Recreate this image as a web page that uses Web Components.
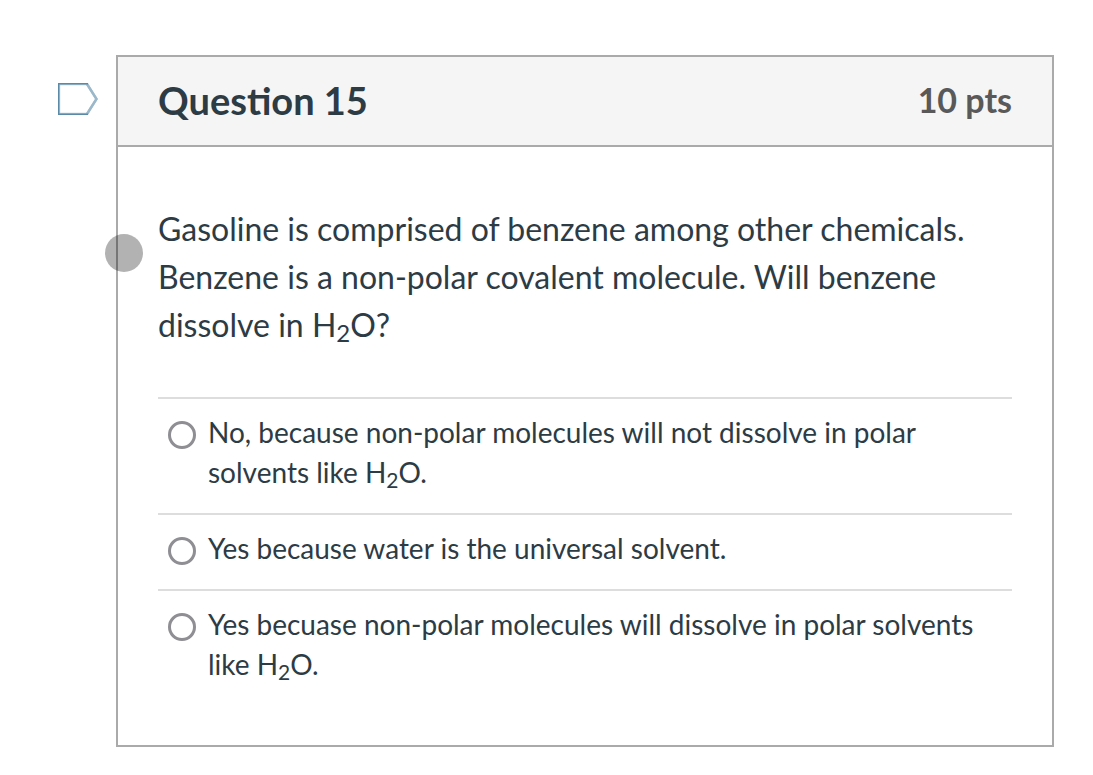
<!DOCTYPE html>
<html lang="en">
<head>
<meta charset="utf-8">
<meta name="viewport" content="width=device-width, initial-scale=1">
<title>Question 15</title>
<style>
  body { margin: 0; background: #fff; color: #2d3b45; font-family: Lato, "Liberation Sans", sans-serif; }
  sub { font-size: 75%; line-height: 0; vertical-align: -5px; }
</style>
</head>
<body>
<quiz-question>
  <flag-button slot="flag"></flag-button>
  <span slot="title">Question 15</span>
  <span slot="points">10 pts</span>
  <span slot="text">Gasoline is comprised of benzene among other chemicals. Benzene is a non-polar covalent molecule. Will benzene dissolve in H<sub>2</sub>O?</span>
  <answer-group>
    <answer-option value="a">No, because non-polar molecules will not dissolve in polar solvents like H<sub>2</sub>O.</answer-option>
    <answer-option value="b">Yes because water is the universal solvent.</answer-option>
    <answer-option value="c">Yes becuase non-polar molecules will dissolve in polar solvents like H<sub>2</sub>O.</answer-option>
  </answer-group>
</quiz-question>

<template id="quiz-question">
  <style>
    :host { display: grid; grid-template-columns: 58px minmax(0, 1fr); padding: 55px 39px 28px 58px; }
    .flag { padding-top: 28px; }
    .card { position: relative; border: 2px solid #aaa; background: #fff; }
    header { display: flex; align-items: center; justify-content: space-between; padding: 19px 40px 21px; background: #f5f5f5; border-bottom: 2px solid #aaa; }
    h2 { margin: 0; font-size: 38px; line-height: 48px; font-weight: 700; }
    .points { font-size: 34px; line-height: 48px; font-weight: 700; color: #595959; }
    .body { padding: 58px 40px 40px; }
    p { margin: 0 0 48px; font-size: 32px; line-height: 48px; }
    .touch { position: absolute; left: -13px; top: 177px; width: 38px; height: 38px; border-radius: 50%; background: rgba(0, 0, 0, .3); pointer-events: none; }
  </style>
  <div class="flag"><slot name="flag"></slot></div>
  <section class="card">
    <header>
      <h2><slot name="title"></slot></h2>
      <div class="points"><slot name="points"></slot></div>
    </header>
    <div class="body">
      <p><slot name="text"></slot></p>
      <slot></slot>
    </div>
    <div class="touch"></div>
  </section>
</template>

<template id="flag-button">
  <style>
    :host { display: block; }
    button { display: block; padding: 0; border: 0; background: none; cursor: pointer; }
    svg { display: block; }
  </style>
  <button type="button" aria-label="Flag question" aria-pressed="false">
    <svg width="40" height="32" viewBox="0 0 40 32" fill="none">
      <path d="M1 1H29L38.500 16L29 31H1Z" stroke="#b5cbd9" stroke-width="2.400"/>
      <path d="M29 1L38.500 16L29 31" stroke="#9bb8cb" stroke-width="2.400"/>
      <path d="M30 .7H.7V31.300H30" stroke="#5a8aa8" stroke-width="1.400"/>
    </svg>
  </button>
</template>

<template id="answer-group">
  <style>
    :host { display: block; }
  </style>
  <slot></slot>
</template>

<template id="answer-option">
  <style>
    :host { display: block; border-top: 2px solid #ddd; padding: 13px 10px 21px; }
    label { display: grid; grid-template-columns: 28px minmax(0, 1fr); column-gap: 12px; font-size: 28px; line-height: 40px; cursor: pointer; }
    input { appearance: none; width: 28px; height: 28px; margin: 9px 0 0; border: 3px solid #8e8e93; border-radius: 50%; background: #fff; }
    input:checked { background: radial-gradient(circle, #0374b5 45%, #fff 50%); }
  </style>
  <label><input type="radio" name="answer"><span><slot></slot></span></label>
</template>

<script>
  class TemplateElement extends HTMLElement {
    constructor() {
      super();
      this.attachShadow({ mode: "open" })
        .append(document.getElementById(this.localName).content.cloneNode(true));
    }
  }

  class QuizQuestion extends TemplateElement {}

  class FlagButton extends TemplateElement {
    constructor() {
      super();
      const button = this.shadowRoot.querySelector("button");
      button.addEventListener("click", () => {
        const on = button.getAttribute("aria-pressed") !== "true";
        button.setAttribute("aria-pressed", on);
        this.shadowRoot.querySelector("path").setAttribute("fill", on ? "#ffe27a" : "none");
      });
    }
  }

  class AnswerOption extends TemplateElement {
    constructor() {
      super();
      this.radio = this.shadowRoot.querySelector("input");
      this.radio.addEventListener("change", () =>
        this.dispatchEvent(new CustomEvent("answer-change", { bubbles: true })));
    }
    connectedCallback() {
      this.radio.value = this.getAttribute("value");
    }
  }

  // Radios in separate shadow roots do not share a group, so the parent keeps one checked.
  class AnswerGroup extends TemplateElement {
    constructor() {
      super();
      this.addEventListener("answer-change", (event) => {
        for (const option of this.querySelectorAll("answer-option")) {
          if (option !== event.target) option.radio.checked = false;
        }
      });
    }
  }

  customElements.define("quiz-question", QuizQuestion);
  customElements.define("flag-button", FlagButton);
  customElements.define("answer-option", AnswerOption);
  customElements.define("answer-group", AnswerGroup);
</script>
</body>
</html>
